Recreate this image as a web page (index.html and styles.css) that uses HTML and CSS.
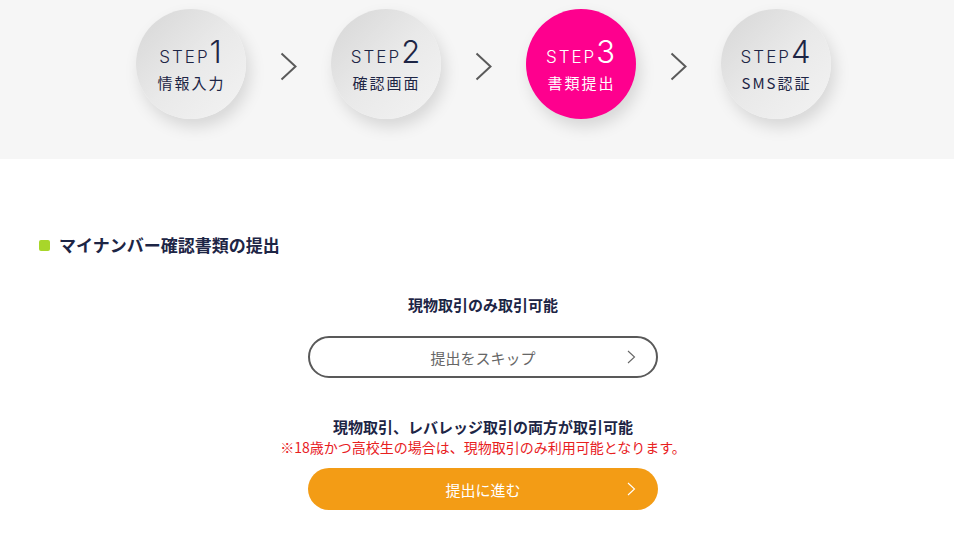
FILE: index.html
```html
<!DOCTYPE html>
<html lang="ja">
<head>
<meta charset="utf-8">
<link rel="stylesheet" href="styles.css">
</head>
<body>
<header class="steps">
  <div class="step">
    <div class="step-top"><span class="step-word">STEP</span><span class="step-num">1</span></div>
    <div class="step-label">情報入力</div>
  </div>
  <div class="arrow"><svg width="18" height="29" viewBox="0 0 18 29"><path d="M1.5 1.5 L15.5 14.5 L1.5 27.5" fill="none" stroke="#5a5a5a" stroke-width="2"/></svg></div>
  <div class="step">
    <div class="step-top"><span class="step-word">STEP</span><span class="step-num">2</span></div>
    <div class="step-label">確認画面</div>
  </div>
  <div class="arrow"><svg width="18" height="29" viewBox="0 0 18 29"><path d="M1.5 1.5 L15.5 14.5 L1.5 27.5" fill="none" stroke="#5a5a5a" stroke-width="2"/></svg></div>
  <div class="step active">
    <div class="step-top"><span class="step-word">STEP</span><span class="step-num">3</span></div>
    <div class="step-label">書類提出</div>
  </div>
  <div class="arrow"><svg width="18" height="29" viewBox="0 0 18 29"><path d="M1.5 1.5 L15.5 14.5 L1.5 27.5" fill="none" stroke="#5a5a5a" stroke-width="2"/></svg></div>
  <div class="step">
    <div class="step-top"><span class="step-word">STEP</span><span class="step-num">4</span></div>
    <div class="step-label">SMS認証</div>
  </div>
</header>
<main class="main">
  <h2 class="section-title"><span class="bullet"></span>マイナンバー確認書類の提出</h2>
  <div class="choices">
    <p class="choice-label first">現物取引のみ取引可能</p>
    <a class="btn btn-outline">提出をスキップ<svg class="chev" width="9" height="14" viewBox="0 0 9 14"><path d="M1 1 L7.5 7 L1 13" fill="none" stroke="#666" stroke-width="1.1"/></svg></a>
    <p class="choice-label second">現物取引、レバレッジ取引の両方が取引可能</p>
    <p class="note">※18歳かつ高校生の場合は、現物取引のみ利用可能となります。</p>
    <a class="btn btn-primary">提出に進む<svg class="chev" width="9" height="14" viewBox="0 0 9 14"><path d="M1 1 L7.5 7 L1 13" fill="none" stroke="#fff" stroke-width="1.1"/></svg></a>
  </div>
</main>
</body>
</html>
```
FILE: styles.css
```css
* { box-sizing: border-box; }
html, body {
  margin: 0;
  padding: 0;
  background: #fff;
  font-family: "Noto Sans CJK JP", "Noto Sans", sans-serif;
  color: #1d2545;
}
.steps {
  height: 159px;
  background: #f6f6f6;
  display: flex;
  justify-content: center;
  align-items: flex-start;
  padding: 9px 0 0 12px;
}
.step {
  width: 110px;
  height: 110px;
  border-radius: 50%;
  background: linear-gradient(135deg, #d6d6d6 0%, #e9e9e9 50%, #f3f3f3 100%);
  box-shadow: 4px 8px 16px rgba(0,0,0,0.13);
  display: flex;
  flex-direction: column;
  align-items: center;
  justify-content: center;
  color: #1d2545;
  padding-top: 2px;
}
.step.active {
  background: #fe008e;
  color: #fff;
}
.step-top {
  display: flex;
  align-items: baseline;
  height: 32px;
  line-height: 32px;
}
.step-word {
  font-family: "Inter", "Noto Sans", sans-serif;
  font-size: 17px;
  letter-spacing: 2px;
  font-weight: 300;
}
.step-num {
  font-family: "Inter", "Noto Sans", sans-serif;
  font-size: 31px;
  font-weight: 300;
  margin-left: 0;
}
.step-label {
  font-size: 15px;
  letter-spacing: 2px;
  line-height: 22px;
  margin-top: 4px;
  padding-left: 2px;
}
.arrow {
  width: 85px;
  display: flex;
  justify-content: center;
  padding-top: 43px;
  padding-left: 2px;
}
.main {
  padding: 74px 27px 0 39px;
}
.section-title {
  margin: 0;
  font-size: 17px;
  font-weight: 700;
  line-height: 24px;
  display: flex;
  align-items: center;
  color: #1d2545;
}
.bullet {
  width: 11px;
  height: 11px;
  border-radius: 2px;
  background: #a8d62a;
  margin-right: 9px;
}
.choices {
  display: flex;
  flex-direction: column;
  align-items: center;
}
.choice-label {
  margin: 0;
  font-size: 15px;
  font-weight: 700;
  line-height: 20px;
  color: #1d2545;
}
.choice-label.first { margin-top: 38px; }
.choice-label.second { margin-top: 39px; }
.note {
  margin: 0;
  font-size: 14px;
  line-height: 20px;
  color: #e8201e;
}
.btn {
  position: relative;
  width: 350px;
  height: 42px;
  border-radius: 21px;
  display: flex;
  align-items: center;
  justify-content: center;
  font-size: 15px;
  text-decoration: none;
}
.btn-outline {
  margin-top: 21px;
  border: 2px solid #595959;
  color: #666;
  background: #fff;
}
.btn-primary {
  margin-top: 11px;
  background: #f39c15;
  color: #fff;
}
.chev {
  position: absolute;
  right: 22px;
  top: 14px;
}
.btn-outline .chev { right: 20px; top: 12px; }
```
